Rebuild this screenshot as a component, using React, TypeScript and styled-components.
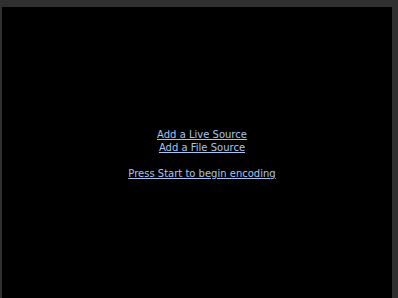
import React from "react";
import styled, { createGlobalStyle } from "styled-components";

const GlobalStyle = createGlobalStyle`
  html, body {
    margin: 0;
    padding: 0;
    background: #2f2f2f;
  }
  #root {
    width: 398px;
    height: 298px;
  }
`;

const Frame = styled.div`
  box-sizing: border-box;
  width: 398px;
  height: 298px;
  padding: 7px 6px 0 2px;
  background: #2f2f2f;
  display: flex;
`;

const Preview = styled.div`
  flex: 1 1 auto;
  background: #000000;
  display: flex;
  flex-direction: column;
  align-items: center;
  justify-content: center;
  padding-left: 10px;
  padding-top: 2px;
`;

const Links = styled.div`
  display: flex;
  flex-direction: column;
  align-items: center;
  font-family: "DejaVu Sans", Verdana, sans-serif;
  font-size: 10px;
  line-height: 13px;
`;

const Link = styled.a<{ $gap?: boolean }>`
  color: #a6c6ee;
  text-decoration: underline;
  cursor: pointer;
  margin-top: ${(p) => (p.$gap ? "13px" : "0")};
`;

export default function App() {
  return (
    <>
      <GlobalStyle />
      <Frame>
        <Preview>
          <Links>
            <Link>Add a Live Source</Link>
            <Link>Add a File Source</Link>
            <Link $gap>Press Start to begin encoding</Link>
          </Links>
        </Preview>
      </Frame>
    </>
  );
}
